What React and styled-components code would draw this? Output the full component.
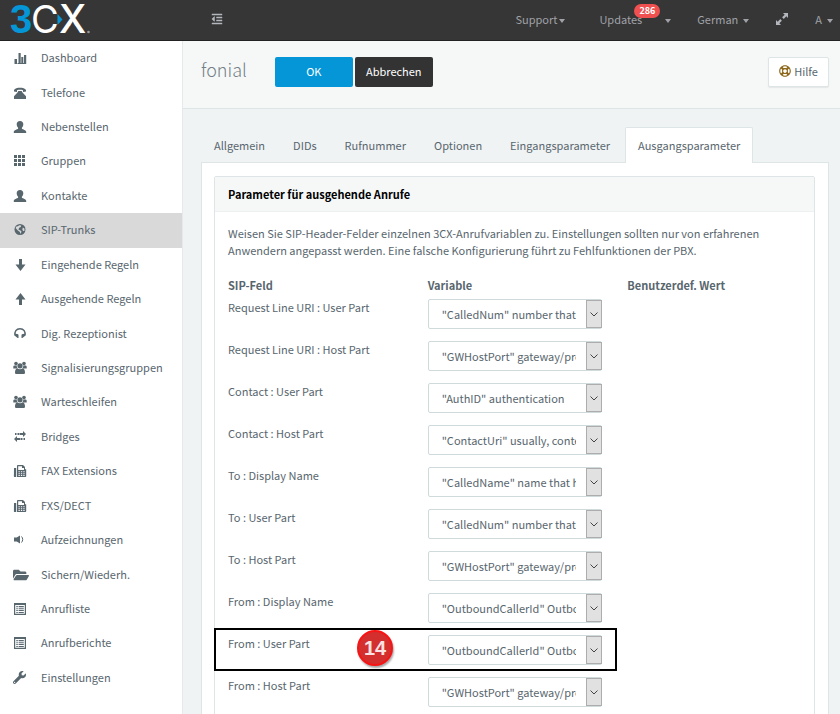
import React from "react";
import styled, { createGlobalStyle } from "styled-components";
import { FaFolderOpen, FaOutdent, FaWrench, FaRegLifeRing } from "react-icons/fa";

const GlobalStyle = createGlobalStyle`
  * {
    box-sizing: border-box;
  }
  body {
    margin: 0;
    font-family: "Noto Sans CJK SC", "Noto Sans", sans-serif;
    font-size: 11px;
    line-height: 18px;
    color: #58666e;
    background: #f0f3f4;
  }
  button, select {
    font: inherit;
    color: inherit;
  }
`;

const Page = styled.div`
  height: 100vh;
  display: flex;
  flex-direction: column;
  overflow: hidden;
`;

const TopBar = styled.header`
  display: flex;
  align-items: center;
  flex: none;
  height: 41px;
  padding: 0 7px 2px 0;
  background: #363636;
  border-bottom: 1px solid #222;
  color: #a6a8b1;
`;

const Brand = styled.a`
  display: flex;
  width: 200px;
  padding-left: 10px;
`;

const IconButton = styled.button`
  display: flex;
  padding: 0;
  border: 0;
  background: none;
  color: #b4b6bd;
  margin-left: ${(props) => (props.$indent ? "11px" : "0")};
`;

const TopMenu = styled.nav`
  display: flex;
  align-items: center;
  gap: 26px;
  margin-left: auto;
`;

const MenuLink = styled.button`
  display: flex;
  align-items: center;
  position: relative;
  padding: 0;
  padding-right: ${(props) => props.$end || "0"};
  gap: ${(props) => props.$gap || "5px"};
  border: 0;
  background: none;
  color: #a0a2a8;
`;

const Caret = styled.span`
  margin-top: 3px;
  border: 3px solid transparent;
  border-top: 4px solid #a0a2a8;
  border-bottom: 0;
`;

const Badge = styled.span`
  position: absolute;
  left: 35px;
  top: -6px;
  padding: 0 5px;
  height: 14px;
  border-radius: 8px;
  background: #f05050;
  color: #fff;
  font-size: 9px;
  font-weight: 700;
  line-height: 14px;
`;

const Body = styled.div`
  display: flex;
  flex: 1;
  min-height: 0;
`;

const Sidebar = styled.nav`
  display: flex;
  flex-direction: column;
  flex: none;
  width: 183px;
  padding-bottom: 19px;
  background: #fff;
  border-right: 1px solid #e4eaec;
`;

const NavItem = styled.a`
  display: flex;
  align-items: center;
  flex: 1;
  padding: 0 0 2px 13px;
  color: #58666e;
  text-decoration: none;
  background: ${(props) => (props.$active ? "#d9d9d9" : "transparent")};
`;

const NavIcon = styled.span`
  display: flex;
  align-items: center;
  width: 28px;
  padding-top: 2px;
`;

const Main = styled.main`
  flex: 1;
  min-width: 0;
  overflow-y: auto;
  scrollbar-width: none;
`;

const TitleBar = styled.div`
  display: flex;
  align-items: center;
  height: 68px;
  padding: 0 11px 5px 18px;
  background: #f6f8f8;
  border-bottom: 1px solid #dee5e7;
`;

const Title = styled.h1`
  margin: 0 28px 6px 0;
  font-size: 18px;
  line-height: 24px;
  font-weight: 300;
  color: #737f86;
`;

const Button = styled.button`
  width: 78px;
  height: 30px;
  margin-right: 2px;
  padding: 0 0 2px;
  border: 0;
  border-radius: 2px;
  color: #fff;
  background: ${(props) => (props.$primary ? "#0596d7" : "#333")};
`;

const HelpButton = styled.button`
  display: flex;
  align-items: center;
  justify-content: center;
  gap: 3px;
  width: 61px;
  height: 30px;
  margin-left: auto;
  padding: 0 0 2px;
  border: 1px solid #dee5e7;
  border-radius: 2px;
  background: #fff;
  box-shadow: 0 1px 1px rgba(90, 90, 90, 0.1);
`;

const Content = styled.div`
  padding: 18px 11px 18px 18px;
`;

const Tabs = styled.div`
  display: flex;
  gap: 2px;
`;

const Tab = styled.button`
  height: 36px;
  margin-bottom: -1px;
  padding: 0 12px 2px;
  border: 1px solid ${(props) => (props.$active ? "#dee5e7" : "transparent")};
  border-bottom: 0;
  border-radius: 2px 2px 0 0;
  background: ${(props) => (props.$active ? "#fff" : "transparent")};
  z-index: 1;
`;

const TabPane = styled.div`
  padding: 13px 13px 13px 12px;
  border: 1px solid #dee5e7;
  background: #fff;
`;

const Panel = styled.section`
  border: 1px solid #dee5e7;
  border-radius: 2px;
`;

const PanelTitle = styled.h2`
  margin: 0;
  padding: 8px 13px;
  background: #f6f8f8;
  border-bottom: 1px solid #edf1f2;
  color: #000;
  font-size: 11px;
  line-height: 18px;
  font-weight: 700;
`;

const Intro = styled.p`
  margin: 0;
  padding: 13px 40px 16px 13px;
  line-height: 17px;
`;

const FieldTable = styled.table`
  width: 100%;
  table-layout: fixed;
  border-collapse: collapse;

  th {
    height: 20px;
    padding: 0 0 0 13px;
    text-align: left;
    font-weight: 700;
  }
  td {
    height: 42px;
    padding: 0 0 0 13px;
    vertical-align: top;
  }
`;

const FieldRow = styled.tr`
  position: relative;
`;

const FieldLabel = styled.label`
  display: block;
  padding-top: 3px;
`;

const SelectBox = styled.div`
  position: relative;
  width: 174px;
  margin-top: 4px;
`;

const Select = styled.select`
  display: block;
  appearance: none;
  width: 100%;
  height: 30px;
  padding: 0 25px 0 13px;
  border: 1px solid #cfdadd;
  border-radius: 2px;
  background: #fff;
`;

const SelectArrow = styled.span`
  position: absolute;
  top: 1px;
  right: 0;
  display: flex;
  align-items: center;
  justify-content: center;
  width: 16px;
  height: 28px;
  border: 1px solid #adadad;
  background: #e1e1e1;
  pointer-events: none;
`;

const Highlight = styled.div`
  position: absolute;
  left: -1px;
  top: -3px;
  width: 403px;
  height: 43px;
  border: 2px solid #000;
  pointer-events: none;
`;

const Step = styled.span`
  position: absolute;
  left: 141px;
  top: 0;
  width: 36px;
  height: 36px;
  border: 2px solid #f81414;
  border-radius: 50%;
  background: #d32f2f;
  box-shadow: 1px 2px 2px rgba(0, 0, 0, 0.35);
  color: #fbe3e3;
  font: 700 20px/32px "Liberation Sans", sans-serif;
  text-align: center;
`;

const LogoSvg = styled.svg`
  overflow: visible;
`;

const Logo = () => (
  <LogoSvg width="82" height="38" viewBox="0 0 82 38" role="img" aria-label="3CX">
    <text x="0" y="33" fill="#0596d7" fontFamily="Liberation Sans, sans-serif" fontWeight="700" fontSize="40">3</text>
    <text x="21" y="33" fill="#fff" fontFamily="Inter, sans-serif" fontWeight="400" fontSize="38">C</text>
    <path d="M47.500 14l5 5.500-5 5.500z" fill="#0596d7" />
    <text x="49" y="33" fill="#fff" fontFamily="Inter, sans-serif" fontWeight="500" fontSize="39">X</text>
    <circle cx="78.500" cy="32" r="1.300" fill="#999" />
  </LogoSvg>
);

const Svg = ({ children, size = 14 }) => (
  <svg width={size} height={size} viewBox="0 0 14 14" fill="currentColor" aria-hidden="true">
    {children}
  </svg>
);

const icons = {
  chart: (
    <Svg>
      <path d="M1.500 8h2.500v5H1.500zM5.500 2h2.200v11H5.500zM4.500 12h8.500v1H4.500zM8.300 6h2v7h-2zM11 4h2.200v9H11z" />
    </Svg>
  ),
  phone: (
    <Svg>
      <path d="M1 5.500V4c1-1.600 3.300-2.200 6-2.200S12 2.400 13 4v1.500l-3 .4V4.200C8.500 3.700 5.500 3.700 4 4.200v1.700z" />
      <path d="M5.200 5h3.600l.5 1.300L13 10.200V13H1v-2.800l3.700-3.900z" />
    </Svg>
  ),
  user: (
    <Svg>
      <path d="M7 1C4.800 1 3.700 2.300 3.700 4.200c0 1.400.6 2.700 1.400 3.500v1.100c-.8.800-4.300 1.200-4.300 3V13h12.400v-1.200c0-1.800-3.500-2.200-4.300-3V7.700c.8-.8 1.400-2.100 1.400-3.500C10.300 2.300 9.200 1 7 1z" />
    </Svg>
  ),
  grid: (
    <Svg>
      <path d="M1 1h3v3H1zM5 1h3v3H5zM9 1h3v3H9zM1 5h3v3H1zM5 5h3v3H5zM9 5h3v3H9zM1 9h3v3H1zM5 9h3v3H5zM9 9h3v3H9z" />
    </Svg>
  ),
  globe: (
    <Svg>
      <circle cx="7" cy="6.500" r="5.500" />
      <path fill="#d9d9d9" d="M6.200 2.300l2 .2-.4 1.400-1.600.8-.8 1.700 2 1 1.200 1.300-1.300 2.200-.4-2-2-1.500-2.300-2.400.8-1.500 1.600-.2zM9.800 4.500l1.600 1 .2 2-1 .8-1.300-1.300z" />
    </Svg>
  ),
  down: (
    <Svg>
      <path d="M6 1h3v5.500h3.500L7.500 13l-5-6.500H6z" />
    </Svg>
  ),
  up: (
    <Svg>
      <path d="M6 13h3V7.500h3.500L7.500 1l-5 6.500H6z" />
    </Svg>
  ),
  headset: (
    <Svg>
      <path d="M2.300 8.500C.9 4.500 3.500 1.700 7 1.700S13.100 4.500 11.700 8.500" fill="none" stroke="currentColor" strokeWidth="1.500" />
      <path d="M1.300 6.800l3.200.3 1 .6v3.400H4.600L1.800 8.800zM12.700 6.800l-3.200.3-1 .6v3.400h.9l2.800-2.300z" />
    </Svg>
  ),
  users: (
    <Svg>
      <circle cx="3" cy="2.600" r="1.800" />
      <circle cx="11" cy="2.600" r="1.800" />
      <circle cx="7" cy="4.800" r="2.600" />
      <path d="M.3 7.500V5.700c0-1 .7-1.300 1.500-1.300h1.900C3.700 5.600 4 6.400 4.500 7L3 7.500zM13.700 7.500V5.700c0-1-.7-1.300-1.500-1.300h-1.900c0 1.200-.3 2-.8 2.600l1.500.5zM4.300 7.300C2.700 7.800 2 9.200 2 11.500c0 1 .6 1.500 1.500 1.500h7c.9 0 1.500-.5 1.500-1.500 0-2.300-.7-3.700-2.300-4.200-1.600 1.200-3.800 1.200-5.400 0z" />
    </Svg>
  ),
  bridge: (
    <Svg>
      <path d="M2 3h1.500v2H2zM4.500 3H6v2H4.500zM6.500 3H10V1l3 3-3 3V5H6.500zM12 8h-1.500v2H12zM9.500 8H8v2h1.500zM7.500 8H4V6L1 9l3 3v-2h3.500z" />
    </Svg>
  ),
  fax: (
    <Svg>
      <path d="M1 4h2.200v9H1.800C1 13 .9 12.600.9 12z" />
      <path fillRule="evenodd" d="M4 1.500L4.800 1H10l2 2v2l1.200.6V12c0 .6-.4 1-1 1H4zM5.200 2.200V6H11V4H9V2.200zM5.500 7.300v1h1.300v-1zM7.900 7.300v1h1.300v-1zM10.300 7.300v1h1.300v-1zM5.500 9.200v1h1.300v-1zM7.900 9.200v1h1.300v-1zM10.300 9.200v1h1.300v-1zM5.500 11v1h1.300v-1zM7.900 11v1h1.300v-1zM10.300 11v1h1.300v-1z" />
    </Svg>
  ),
  speaker: (
    <Svg>
      <path d="M1 4.500h2.700L7 2.500v8l-3.300-2H1z" />
      <path d="M8.500 3.500c1.600 1.600 1.600 4.400 0 6" fill="none" stroke="currentColor" strokeWidth="1" />
    </Svg>
  ),
  folder: <FaFolderOpen size={16} />,
  list: (
    <Svg>
      <path d="M1 1h12v12H1zM2.200 3v8.800h9.600V3z" fillRule="evenodd" />
      <path d="M3.300 4h1.500v1.300H3.300zM5.600 4h5.200v1.300H5.600zM3.300 6.300h1.500v1H3.300zM5.600 6.300h5.200v1H5.600zM3.300 8h1.500v1H3.300zM5.600 8h5.200v1H5.600zM3.300 9.900h1.500v1H3.300zM5.600 9.900h5.200v1H5.600z" />
    </Svg>
  ),
  wrench: <FaWrench size={13} />,
};

const menu = [
  { name: "Dashboard", icon: "chart" },
  { name: "Telefone", icon: "phone" },
  { name: "Nebenstellen", icon: "user" },
  { name: "Gruppen", icon: "grid" },
  { name: "Kontakte", icon: "user" },
  { name: "SIP-Trunks", icon: "globe" },
  { name: "Eingehende Regeln", icon: "down" },
  { name: "Ausgehende Regeln", icon: "up" },
  { name: "Dig. Rezeptionist", icon: "headset" },
  { name: "Signalisierungsgruppen", icon: "users" },
  { name: "Warteschleifen", icon: "users" },
  { name: "Bridges", icon: "bridge" },
  { name: "FAX Extensions", icon: "fax" },
  { name: "FXS/DECT", icon: "fax" },
  { name: "Aufzeichnungen", icon: "speaker" },
  { name: "Sichern/Wiederh.", icon: "folder" },
  { name: "Anrufliste", icon: "list" },
  { name: "Anrufberichte", icon: "list" },
  { name: "Einstellungen", icon: "wrench" },
];

const tabs = ["Allgemein", "DIDs", "Rufnummer", "Optionen", "Eingangsparameter", "Ausgangsparameter"];

const fields = [
  { label: "Request Line URI : User Part", value: '"CalledNum" number that' },
  { label: "Request Line URI : Host Part", value: '"GWHostPort" gateway/provider' },
  { label: "Contact : User Part", value: '"AuthID" authentication' },
  { label: "Contact : Host Part", value: '"ContactUri" usually, content' },
  { label: "To : Display Name", value: '"CalledName" name that has' },
  { label: "To : User Part", value: '"CalledNum" number that' },
  { label: "To : Host Part", value: '"GWHostPort" gateway/provider' },
  { label: "From : Display Name", value: '"OutboundCallerId" Outbound' },
  { label: "From : User Part", value: '"OutboundCallerId" Outbound', step: 14 },
  { label: "From : Host Part", value: '"GWHostPort" gateway/provider' },
];

class App extends React.Component {
  state = {
    page: "SIP-Trunks",
    tab: "Ausgangsparameter",
  };

  render() {
    return (
      <Page>
        <GlobalStyle />
        <TopBar>
          <Brand href="#">
            <Logo />
          </Brand>
          <IconButton $indent aria-label="Menü">
            <FaOutdent size={12} />
          </IconButton>
          <TopMenu>
            <MenuLink $gap="2px" $end="8px">Support<Caret /></MenuLink>
            <MenuLink $gap="23px">
              Updates<Badge>286</Badge><Caret />
            </MenuLink>
            <MenuLink>German<Caret /></MenuLink>
            <IconButton aria-label="Vollbild">
              <Svg size={14}>
                <path d="M8 1h5v5l-1.700-1.700-2.600 2.600-1.600-1.600 2.600-2.600zM6 13H1V8l1.700 1.700 2.600-2.600 1.600 1.600-2.600 2.600z" />
              </Svg>
            </IconButton>
            <MenuLink>A<Caret /></MenuLink>
          </TopMenu>
        </TopBar>

        <Body>
          <Sidebar>
            {menu.map((item) => (
              <NavItem
                key={item.name}
                href="#"
                $active={item.name === this.state.page}
                onClick={() => this.setState({ page: item.name })}
              >
                <NavIcon>{icons[item.icon]}</NavIcon>
                {item.name}
              </NavItem>
            ))}
          </Sidebar>

          <Main>
            <TitleBar>
              <Title>fonial</Title>
              <Button $primary>OK</Button>
              <Button>Abbrechen</Button>
              <HelpButton>
                <FaRegLifeRing size={12} color="#8a6414" />
                Hilfe
              </HelpButton>
            </TitleBar>

            <Content>
              <Tabs role="tablist">
                {tabs.map((tab) => (
                  <Tab
                    key={tab}
                    role="tab"
                    $active={tab === this.state.tab}
                    onClick={() => this.setState({ tab })}
                  >
                    {tab}
                  </Tab>
                ))}
              </Tabs>

              <TabPane>
                <Panel>
                  <PanelTitle>Parameter für ausgehende Anrufe</PanelTitle>
                  <Intro>
                    Weisen Sie SIP-Header-Felder einzelnen 3CX-Anrufvariablen zu. Einstellungen sollten nur von
                    erfahrenen Anwendern angepasst werden. Eine falsche Konfigurierung führt zu Fehlfunktionen der PBX.
                  </Intro>
                  <FieldTable>
                    <thead>
                      <tr>
                        <th>SIP-Feld</th>
                        <th>Variable</th>
                        <th>Benutzerdef. Wert</th>
                      </tr>
                    </thead>
                    <tbody>
                      {fields.map((field, i) => (
                        <FieldRow key={field.label}>
                          <td>
                            <FieldLabel htmlFor={"field" + i}>{field.label}</FieldLabel>
                            {field.step && (
                              <Highlight>
                                <Step>{field.step}</Step>
                              </Highlight>
                            )}
                          </td>
                          <td>
                            <SelectBox>
                              <Select id={"field" + i}>
                                <option>{field.value}</option>
                              </Select>
                              <SelectArrow>
                                <svg width="8" height="5" viewBox="0 0 8 5" fill="none" stroke="#444">
                                  <path d="M.5.5L4 4 7.500.5" />
                                </svg>
                              </SelectArrow>
                            </SelectBox>
                          </td>
                          <td />
                        </FieldRow>
                      ))}
                    </tbody>
                  </FieldTable>
                </Panel>
              </TabPane>
            </Content>
          </Main>
        </Body>
      </Page>
    );
  }
}

export default App;
